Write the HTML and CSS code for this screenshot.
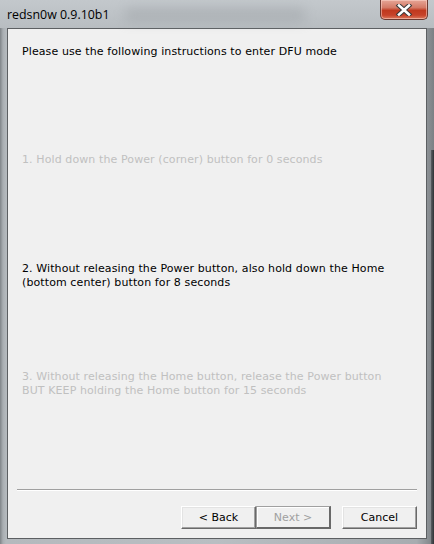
FILE: index.html
```html
<!DOCTYPE html>
<html>
<head>
<meta charset="utf-8">
<link rel="stylesheet" href="styles.css">
</head>
<body>
<div class="window">
  <div class="titlebar">
    <div class="blur"></div>
    <span class="title">redsn0w 0.9.10b1</span>
    <div class="close">
      <svg width="20" height="12" viewBox="0 0 20 12">
        <path d="M5 1.5 L15 10.5 M15 1.5 L5 10.5" stroke="#3a3a3a" stroke-width="4.6" stroke-linecap="square" fill="none"/>
        <path d="M5 1.5 L15 10.5 M15 1.5 L5 10.5" stroke="#ffffff" stroke-width="2.6" stroke-linecap="square" fill="none"/>
      </svg>
    </div>
  </div>
  <div class="client">
    <p class="header">Please use the following instructions to enter DFU mode</p>
    <p class="step step1 dim">1. Hold down the Power (corner) button for 0 seconds</p>
    <p class="step step2">2. Without releasing the Power button, also hold down the Home<br>(bottom center) button for 8 seconds</p>
    <p class="step step3 dim">3. Without releasing the Home button, release the Power button<br>BUT KEEP holding the Home button for 15 seconds</p>
    <div class="footer">
      <div class="separator"></div>
      <div class="buttons">
        <button class="btn">&lt; Back</button>
        <button class="btn default" disabled>Next &gt;</button>
        <button class="btn cancel">Cancel</button>
      </div>
    </div>
  </div>
  <div class="edge-right"></div>
</div>
</body>
</html>
```

FILE: styles.css
```css
html, body {
  margin: 0;
  padding: 0;
  width: 434px;
  height: 544px;
  overflow: hidden;
}

.window {
  width: 434px;
  height: 544px;
  display: flex;
  flex-direction: column;
  background: linear-gradient(90deg, #7f8488 0px, #a9aeb2 3px, #b4b9bd 6px, #b9bec2 50%, #a7acb0 96%, #7b8084 100%);
  position: relative;
  overflow: hidden;
}

.edge-right {
  position: absolute;
  right: 0;
  top: 150px;
  bottom: 0;
  width: 3px;
  background: linear-gradient(90deg, #5a5e62, #2e3236);
}

.titlebar {
  height: 28px;
  display: flex;
  justify-content: space-between;
  align-items: flex-start;
  position: relative;
  background: linear-gradient(180deg, #c3c8cc 0%, #b8bdc1 100%);
}

.blur {
  position: absolute;
  left: 125px;
  top: 8px;
  width: 180px;
  height: 14px;
  background: #9a9fa3;
  filter: blur(6px);
  opacity: 0.45;
}

.title {
  position: relative;
  margin: 8px 0 0 7px;
  font-family: "Open Sans", "DejaVu Sans", sans-serif;
  font-size: 12.4px;
  line-height: 14px;
  color: #000;
}

.close {
  position: relative;
  width: 46px;
  height: 19px;
  margin-right: 6px;
  border: 1px solid #6b3a32;
  border-top: none;
  border-radius: 0 0 5px 5px;
  background: linear-gradient(180deg, #e6a697 0%, #d47a66 40%, #c0391f 55%, #c7432a 80%, #dc7a5e 100%);
  box-shadow: inset 0 0 0 1px rgba(255, 220, 210, 0.5);
  display: flex;
  align-items: center;
  justify-content: center;
}

.client {
  flex: 1;
  margin: 0 7px 5px 7px;
  border: 1px solid #5c5f62;
  background: #f0f0f0;
  display: flex;
  flex-direction: column;
  padding: 0 9px 9px 9px;
  font-family: "DejaVu Sans", sans-serif;
  font-size: 11px;
  line-height: 14px;
  letter-spacing: 0.1px;
  color: #000;
}

.client p {
  margin: 0 0 0 5px;
}

.header {
  padding-top: 16px;
}

.step1 {
  margin-top: 94px !important;
}

.step2 {
  margin-top: 95px !important;
}

.step3 {
  margin-top: 80px !important;
}

.dim {
  color: #c0c0c0;
}

.footer {
  margin-top: auto;
}

.separator {
  height: 0;
  border-top: 1px solid #a0a0a0;
  border-bottom: 1px solid #ffffff;
}

.buttons {
  margin-top: 15px;
  display: flex;
  justify-content: flex-end;
}

.btn {
  box-sizing: border-box;
  width: 75px;
  height: 23px;
  margin: 0;
  padding: 0;
  background: #f0f0f0;
  border-style: solid;
  border-width: 1px;
  border-color: #ffffff #696969 #696969 #ffffff;
  box-shadow: inset -1px -1px 0 #a0a0a0, inset 1px 1px 0 #e3e3e3;
  font-family: "DejaVu Sans", sans-serif;
  font-size: 11px;
  color: #000;
}

.default {
  border-color: #a0a0a0 #696969 #696969 #a0a0a0;
  border-width: 1px 2px 2px 1px;
  box-shadow: inset 1px 1px 0 #ffffff;
  color: #a0a0a0;
}

.cancel {
  margin-left: 11px;
}
```
